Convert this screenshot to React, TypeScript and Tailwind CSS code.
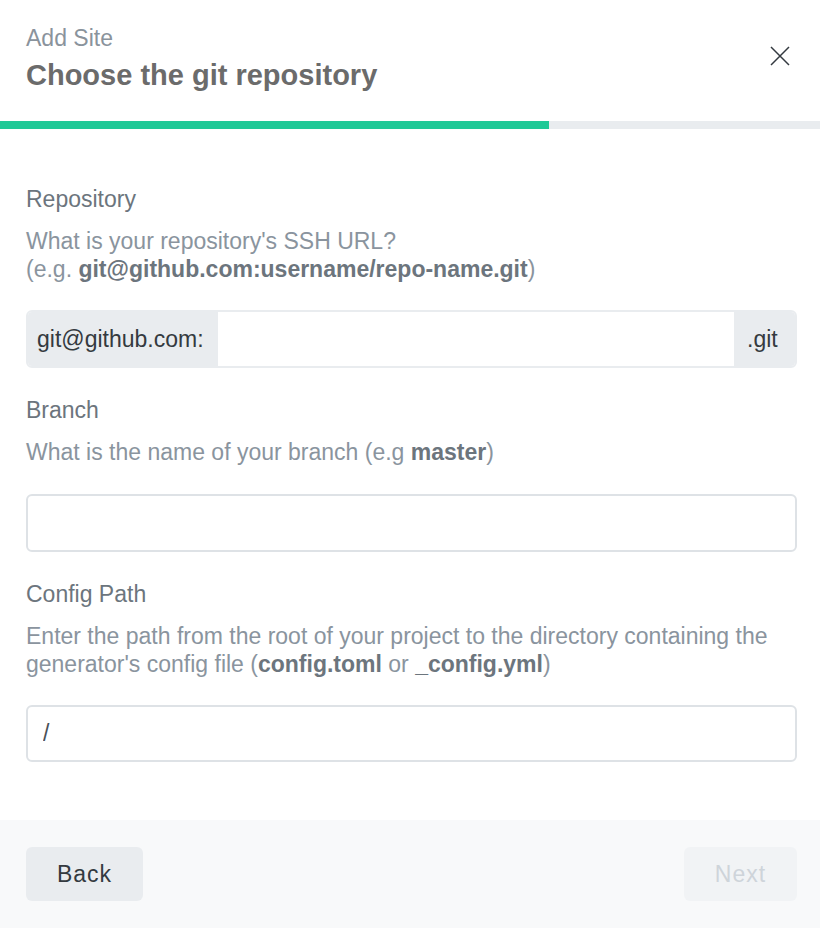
function Field({
  label,
  children,
  description,
  descGap = 'mb-[27px]',
}: {
  label: string
  description: React.ReactNode
  children: React.ReactNode
  descGap?: string
}) {
  return (
    <div className="flex flex-col">
      <label className="text-[23px] leading-[28px] text-[#6c757d] mb-[14px]">{label}</label>
      <p className={`text-[23px] leading-[28px] text-[#8a949e] ${descGap}`}>{description}</p>
      {children}
    </div>
  )
}

export default function App() {
  return (
    <div
      className="w-[820px] h-[928px] bg-white flex flex-col"
      style={{ fontFamily: '"Liberation Sans", Arial, sans-serif' }}
    >
      <div className="h-[121px] pl-[26px] pr-[30px] pt-[24px] flex justify-between items-start">
        <div>
          <p className="text-[23px] leading-[28px] text-[#8a939c]">Add Site</p>
          <h1 className="text-[29px] leading-[46px] font-bold text-[#6b6b6b]">
            Choose the git repository
          </h1>
        </div>
        <button className="mt-[22px]">
          <svg width="20" height="20" viewBox="0 0 20 20" fill="none" stroke="#343a40" strokeWidth="1.5">
            <path d="M1 1L19 19M19 1L1 19" />
          </svg>
        </button>
      </div>

      <div className="h-[8px] bg-[#e9ecef]">
        <div className="h-full w-[549px] bg-[#20c997]" />
      </div>

      <div className="flex-1 pl-[26px] pr-[23px] pt-[56px] flex flex-col gap-[28px]">
        <Field
          label="Repository"
          description={
            <>
              What is your repository's SSH URL?
              <br />
              (e.g. <strong className="text-[#6c757d]">git@github.com:username/repo-name.git</strong>)
            </>
          }
        >
          <div className="flex h-[58px] rounded-[6px] border-2 border-[#e9ecef] overflow-hidden">
            <span className="bg-[#e9ecef] w-[190px] pl-[9px] flex items-center text-[23px] text-[#343a40]">
              git@github.com:
            </span>
            <input className="flex-1 min-w-0 outline-none px-3 text-[23px] text-[#343a40]" />
            <span className="bg-[#e9ecef] w-[61px] pl-[13px] flex items-center text-[23px] text-[#343a40]">
              .git
            </span>
          </div>
        </Field>

        <Field
          label="Branch"
          descGap="mb-[28px]"
          description={
            <>
              What is the name of your branch (e.g <strong className="text-[#6c757d]">master</strong>)
            </>
          }
        >
          <input className="h-[58px] rounded-[6px] border-2 border-[#dee2e6] outline-none px-[15px] text-[23px] text-[#495057]" />
        </Field>

        <Field
          label="Config Path"
          description={
            <>
              Enter the path from the root of your project to the directory containing the
              generator's config file (<strong className="text-[#6c757d]">config.toml</strong> or{' '}
              <strong className="text-[#6c757d]">_config.yml</strong>)
            </>
          }
        >
          <input
            defaultValue="/"
            className="h-[57px] rounded-[6px] border-2 border-[#dee2e6] outline-none px-[15px] text-[23px] text-[#495057]"
          />
        </Field>
      </div>

      <div className="h-[108px] bg-[#f8f9fa] pl-[26px] pr-[23px] flex items-center justify-between">
        <button className="h-[54px] w-[117px] rounded-[6px] bg-[#e9ecef] text-[23px] text-[#343a40] tracking-[1px]">
          Back
        </button>
        <button className="h-[54px] w-[113px] rounded-[6px] bg-[#f1f3f5] text-[23px] text-[#ced4da] tracking-[1px]">
          Next
        </button>
      </div>
    </div>
  )
}
